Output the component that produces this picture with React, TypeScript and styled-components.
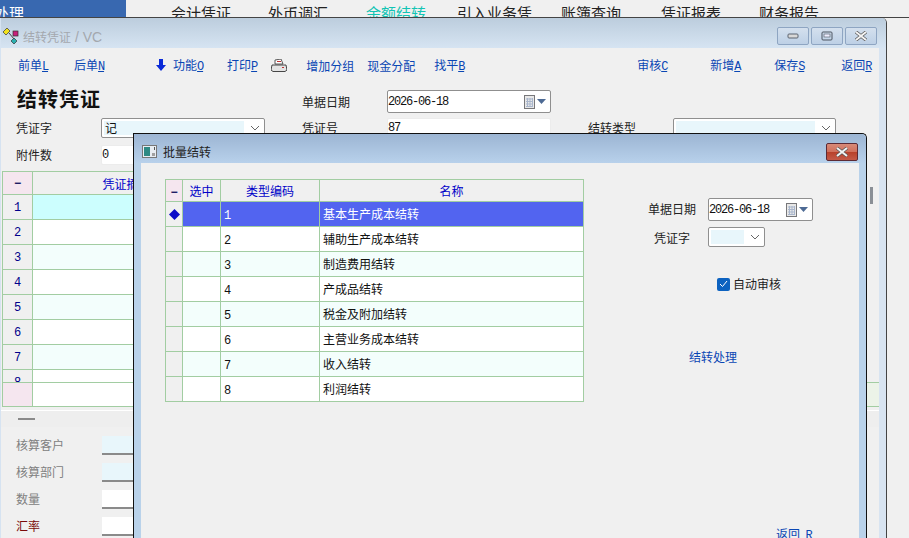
import React from "react";
import styled, { createGlobalStyle } from "styled-components";

const CJK = `"Noto Sans CJK SC", "Liberation Sans", sans-serif`;
const LINK = "#0a46b4";
const GRID_LINE = "#a2cda2";

const menuItems = [
  { text: "会计凭证", gap: 45, color: "#222" },
  { text: "外币调汇", gap: 37, color: "#222" },
  { text: "余额结转", gap: 38, color: "#12c4b4" },
  { text: "引入业务凭", gap: 31, color: "#222" },
  { text: "账簿查询", gap: 29, color: "#222" },
  { text: "凭证报表", gap: 40, color: "#222" },
  { text: "财务报告", gap: 38, color: "#222" },
];

const batchRows = [
  "基本生产成本结转",
  "辅助生产成本结转",
  "制造费用结转",
  "产成品结转",
  "税金及附加结转",
  "主营业务成本结转",
  "收入结转",
  "利润结转",
];

const GlobalStyle = createGlobalStyle`
  html, body {
    margin: 0;
    padding: 0;
    width: 909px;
    height: 538px;
    overflow: hidden;
    background: #f0f0f0;
    font-family: ${CJK};
    font-size: 12px;
    color: #111;
  }
`;

const Page = styled.div`
  width: 909px;
  height: 538px;
  overflow: hidden;
`;

const MenuBar = styled.div`
  display: flex;
  height: 17px;
  border-bottom: 1px solid #444;
  overflow: hidden;
  font-size: 15px;
  line-height: 25px;
`;

const MenuHome = styled.div`
  width: 126px;
  height: 17px;
  background: #3868b0;
  color: #fff;
  text-indent: -6px;
  white-space: nowrap;
  overflow: hidden;
`;

const MenuItem = styled.div<{ $gap: number; $color: string }>`
  margin-left: ${(p) => p.$gap}px;
  color: ${(p) => p.$color};
  white-space: nowrap;
`;

const MainWindow = styled.div`
  position: relative;
  width: 887px;
  height: 520px;
  box-sizing: border-box;
  border-right: 1px solid #444;
  border-left: 1px solid #d6e3f1;
  border-top-right-radius: 5px;
  background: #d8e4f1;
`;

const TitleBar = styled.div`
  display: flex;
  align-items: center;
  height: 30px;
  box-sizing: border-box;
  padding: 6px 2px 0 2px;
  border-top-right-radius: 5px;
  background: linear-gradient(#bccddd, #d6e4f2);
`;

const TitleText = styled.span`
  margin-left: 3px;
  font-size: 12px;
  color: #a4a8ae;
`;

const TitleLatin = styled.span`
  font-family: "Liberation Sans", sans-serif;
  font-size: 14px;
`;

const WinButtons = styled.div`
  display: flex;
  gap: 2px;
  margin-left: auto;
  margin-right: 7px;
`;

const WinButton = styled.div`
  display: flex;
  align-items: center;
  justify-content: center;
  width: 32px;
  height: 18px;
  box-sizing: border-box;
  border: 1px solid #8ea5c2;
  border-radius: 2px;
  background: linear-gradient(#d4e0ee, #bdd0e6);
`;

const Client = styled.div`
  width: 878px;
  height: 490px;
  background: #f0f0f0;
`;

const Toolbar = styled.div`
  display: flex;
  align-items: center;
  height: 36px;
  color: ${LINK};
  white-space: nowrap;
`;

const ToolItem = styled.span<{ $left: number }>`
  display: inline-block;
  margin-left: ${(p) => p.$left}px;
  line-height: 14px;
`;

const Hot = styled.span`
  font-family: "Liberation Mono", monospace;
  font-size: 12px;
  letter-spacing: -1.2px;
  text-decoration: underline;
`;

const FormGrid = styled.div`
  display: grid;
  grid-template-columns: 85px 164px 37px 85px 164px 37px 85px 163px;
  grid-template-rows: 28px 27px 20px;
  padding: 6px 0 0 15px;
  align-items: start;
`;

const BigTitle = styled.div`
  grid-column: 1 / span 2;
  margin: -3px 0 0 1px;
  font-size: 20px;
  font-weight: 700;
  line-height: 23px;
  letter-spacing: 1px;
  color: #111;
`;

const Label = styled.div<{ $col: number; $h?: number }>`
  grid-column: ${(p) => p.$col};
  line-height: ${(p) => p.$h ?? 20}px;
  color: #222;
`;

const FieldBox = styled.div<{ $col?: number; $width?: number; $h?: number; $flat?: boolean }>`
  ${(p) => (p.$col ? `grid-column: ${p.$col};` : "")}
  display: flex;
  align-items: center;
  box-sizing: border-box;
  width: ${(p) => (p.$width ? `${p.$width}px` : "auto")};
  height: ${(p) => p.$h ?? 20}px;
  background: #fff;
  border: 1px solid ${(p) => (p.$flat ? "#ececec" : "#8f8f8f")};
  border-radius: 2px;
  padding: 0 0 0 2px;
`;

const Mono = styled.span`
  margin-left: -2px;
  font-family: "Liberation Mono", monospace;
  font-size: 12px;
  letter-spacing: -1.2px;
  color: #111;
`;

const SelectFill = styled.div`
  flex: 1;
  height: calc(100% - 4px);
  margin-right: 6px;
  padding-left: 1px;
  background: #e8f6fb;
  line-height: 14px;
`;

const ChevronSlot = styled.div`
  display: flex;
  margin-right: 4px;
`;

const DateIcons = styled.div`
  display: flex;
  align-items: center;
  margin-left: auto;
  margin-right: 4px;
  gap: 2px;
`;

const VoucherGrid = styled.div`
  position: relative;
  margin: 6px 0 0 1px;
  width: 877px;
`;

const GridBody = styled.div`
  height: 188px;
  overflow: hidden;
`;

const VoucherRow = styled.div<{ $h: number }>`
  display: grid;
  grid-template-columns: 31px 188px;
  height: ${(p) => p.$h}px;
  box-sizing: border-box;
`;

const IndexCell = styled.div<{ $pink?: boolean }>`
  display: flex;
  align-items: center;
  justify-content: center;
  box-sizing: border-box;
  padding-top: 1px;
  border: 1px solid ${GRID_LINE};
  border-width: 1px 1px 0 1px;
  background: ${(p) => (p.$pink ? "#f5e6ef" : "#f0f0f0")};
  color: #00008b;
  font-family: "Liberation Mono", monospace;
`;

const MinusMark = styled.span`
  font-family: "Liberation Mono", monospace;
  font-weight: 700;
  color: #101060;
`;

const BodyCell = styled.div<{ $fill?: string }>`
  display: flex;
  align-items: center;
  justify-content: center;
  box-sizing: border-box;
  border-top: 1px solid ${GRID_LINE};
  border-right: 1px solid ${GRID_LINE};
  background: ${(p) => p.$fill ?? "#fff"};
  color: #0000c8;
`;

const SummaryRow = styled.div`
  display: grid;
  grid-template-columns: 31px 1fr;
  height: 25px;
  box-sizing: border-box;
  border-top: 1px solid ${GRID_LINE};
  border-bottom: 1px solid ${GRID_LINE};
`;

const SummaryIndex = styled.div`
  background: #f5e6ef;
  border-left: 1px solid ${GRID_LINE};
  border-right: 1px solid ${GRID_LINE};
`;

const SummaryFill = styled.div`
  background: linear-gradient(to right, #fff 220px, #ecf3e8 220px);
`;

const Thumb = styled.div`
  position: absolute;
  left: 868px;
  top: 16px;
  width: 3px;
  height: 17px;
  background: #8a8f96;
`;

const Divider = styled.div`
  display: flex;
  align-items: center;
  height: 16px;
  margin-top: 3px;
  border-top: 1px solid #fff;
  background: #eeeeee;
  padding-left: 17px;
`;

const Dash = styled.div`
  width: 17px;
  height: 2px;
  background: #8a8a8a;
`;

const ExtraForm = styled.div`
  display: grid;
  grid-template-columns: 85px 164px;
  grid-auto-rows: 19px;
  row-gap: 8px;
  padding: 9px 0 0 15px;
  align-items: center;
`;

const ExtraLabel = styled.div<{ $red?: boolean }>`
  padding-bottom: 2px;
  color: ${(p) => (p.$red ? "#7a0a0a" : "#808080")};
`;

const ExtraInput = styled.div<{ $tint?: boolean }>`
  height: 19px;
  margin-left: 1px;
  box-sizing: border-box;
  background: ${(p) => (p.$tint ? "#e8f6fb" : "#fff")};
  border-bottom: 2px solid #8a8a8a;
`;

const Dialog = styled.div`
  position: absolute;
  left: 132px;
  top: 115px;
  width: 734px;
  height: 420px;
  box-sizing: border-box;
  border: 1px solid #111;
  border-bottom: none;
  border-top-right-radius: 5px;
  background: #b9d2ea;
`;

const DialogTitle = styled.div`
  display: flex;
  align-items: center;
  height: 29px;
  box-sizing: border-box;
  padding: 6px 8px 0 8px;
  border-top-right-radius: 5px;
  background: linear-gradient(#9cb5d3, #b8d1eb);
  font-size: 12px;
  color: #222;
`;

const DialogName = styled.span`
  margin-left: 6px;
`;

const CloseButton = styled.div`
  display: flex;
  align-items: center;
  justify-content: center;
  margin-left: auto;
  width: 32px;
  height: 18px;
  box-sizing: border-box;
  border: 1px solid #5c2a34;
  border-radius: 2px;
  background: linear-gradient(#d88a78 0%, #d0705c 48%, #b8402a 50%, #c45a48 100%);
`;

const DialogClient = styled.div`
  display: flex;
  align-items: flex-start;
  width: 718px;
  height: 390px;
  margin-left: 7px;
  padding: 16px 0 0 24px;
  box-sizing: border-box;
  background: #f0f0f0;
`;

const BatchTable = styled.table`
  flex: none;
  width: 419px;
  table-layout: fixed;
  border-collapse: collapse;
  font-size: 12px;
  border: 1px solid ${GRID_LINE};
`;

const HeadCell = styled.th<{ $w: number; $pink?: boolean }>`
  width: ${(p) => p.$w}px;
  height: 21px;
  padding: 0;
  font-weight: 400;
  color: #0000c8;
  background: ${(p) => (p.$pink ? "#f5e6ef" : "#f0f0f0")};
  border: 1px solid ${GRID_LINE};
`;

const Row = styled.tr<{ $tint: boolean; $selected: boolean }>`
  height: 25px;
  background: ${(p) => (p.$selected ? "#5264f0" : p.$tint ? "#f3fefc" : "#fff")};
  color: ${(p) => (p.$selected ? "#fff" : "#111")};
`;

const Cell = styled.td`
  padding: 0 0 1px 3px;
  border: 1px solid ${GRID_LINE};
  white-space: nowrap;
`;

const MarkCell = styled.td`
  padding: 0;
  background: #f0f0f0;
  border: 1px solid ${GRID_LINE};
  text-align: center;
  line-height: 0;
`;

const CodeText = styled.span<{ $light: boolean }>`
  font-family: "Liberation Mono", monospace;
  letter-spacing: -1.2px;
  color: ${(p) => (p.$light ? "#fff" : "#111")};
`;

const SidePanel = styled.div`
  flex: 1;
  display: flex;
  flex-direction: column;
  align-items: flex-start;
  padding: 19px 0 0 64px;
`;

const SideFields = styled.div`
  display: grid;
  grid-template-columns: 48px 105px;
  grid-template-rows: 23px 20px;
  column-gap: 12px;
  row-gap: 6px;
  align-items: center;
  justify-items: center;
  color: #222;
`;

const SideLabel = styled.span<{ $lift?: number }>`
  padding-bottom: ${(p) => p.$lift ?? 0}px;
`;

const SideField = styled(FieldBox)`
  justify-self: start;
`;

const AutoCheck = styled.label`
  display: flex;
  align-items: center;
  gap: 3px;
  margin: 30px 0 0 69px;
  height: 14px;
  line-height: 12px;
  color: #222;
`;

const CheckBox = styled.div`
  display: flex;
  align-items: center;
  justify-content: center;
  width: 13px;
  height: 13px;
  border-radius: 2px;
  background: #0c62c0;
`;

const SideLink = styled.div<{ $left: number; $top: number }>`
  margin: ${(p) => p.$top}px 0 0 ${(p) => p.$left}px;
  color: ${LINK};
  line-height: 16px;
  white-space: nowrap;
`;

const Chevron = () => (
  <ChevronSlot>
    <svg width="10" height="6" viewBox="0 0 10 6">
      <path d="M1 1l4 4 4-4" fill="none" stroke="#666" strokeWidth="1" />
    </svg>
  </ChevronSlot>
);

const CalendarIcons = () => (
  <DateIcons>
    <svg width="12" height="14" viewBox="0 0 12 14">
      <rect x="1.5" y="0.5" width="10" height="13" fill="#e8e8e8" stroke="#77777a" />
      <path d="M3 4h7M3 6.5h7M3 9h7M3 11.5h7M4.5 3v9M7 3v9M9.5 3v9" stroke="#a9b6cc" strokeWidth="1" />
    </svg>
    <svg width="9" height="5" viewBox="0 0 9 5">
      <path d="M0 0h9L4.5 5z" fill="#4d6a94" />
    </svg>
  </DateIcons>
);

const CloseGlyph = () => (
  <svg width="14" height="10" viewBox="0 0 14 10">
    <path d="M2 1l10 8M12 1L2 9" stroke="#555" strokeWidth="3.4" />
    <path d="M2 1l10 8M12 1L2 9" stroke="#f4f4f4" strokeWidth="2" />
  </svg>
);

const AppIcon = () => (
  <svg width="17" height="17" viewBox="0 0 17 17">
    <path d="M4 0l3 3-4 4-3-3z" fill="#f2e21c" stroke="#333" strokeWidth="0.7" />
    <rect x="10" y="3" width="5" height="5" fill="#c8207a" stroke="#333" strokeWidth="0.7" />
    <path d="M11 10l3 3-3 3-3-3z" fill="#2ab0b0" stroke="#333" strokeWidth="0.7" />
    <path d="M6 5l5 6" stroke="#444" strokeWidth="1" />
  </svg>
);

const DialogIcon = () => (
  <svg width="15" height="13" viewBox="0 0 15 13">
    <rect x="0.5" y="0.5" width="14" height="12" fill="#e8edf2" stroke="#777" />
    <rect x="2" y="2" width="6" height="9" fill="#2e8a84" />
    <rect x="10" y="8" width="3" height="3" fill="#a0a0a0" />
    <rect x="12" y="2" width="1" height="3" fill="#555" />
  </svg>
);

const PrinterIcon = () => (
  <svg width="16" height="13" viewBox="0 0 16 13">
    <path d="M4 1l6-1 2 5H4z" fill="#fff" stroke="#333" strokeWidth="0.8" />
    <path d="M6 2.5h4" stroke="#c03030" strokeWidth="1" />
    <path d="M1 6h14l1 5-2 1.5H2L0 11z" fill="#e4e4e4" stroke="#333" strokeWidth="0.9" />
    <path d="M11 8.5h2" stroke="#c03030" strokeWidth="1" />
  </svg>
);

const voucherFill = (i: number) => (i === 0 ? "#ccfefe" : i % 2 === 0 ? "#f3fefc" : "#fff");

export default function App() {
  return (
    <Page>
      <GlobalStyle />
      <MenuBar>
        <MenuHome>处理</MenuHome>
        {menuItems.map((m) => (
          <MenuItem key={m.text} $gap={m.gap} $color={m.color}>
            {m.text}
          </MenuItem>
        ))}
      </MenuBar>

      <MainWindow>
        <TitleBar>
          <AppIcon />
          <TitleText>
            结转凭证<TitleLatin> / VC</TitleLatin>
          </TitleText>
          <WinButtons>
            <WinButton>
              <svg width="12" height="6" viewBox="0 0 12 6">
                <rect x="1" y="1" width="10" height="4" rx="1" fill="#d8d8d8" stroke="#5c6470" />
              </svg>
            </WinButton>
            <WinButton>
              <svg width="12" height="10" viewBox="0 0 12 10">
                <rect x="1" y="1" width="10" height="8" rx="1" fill="none" stroke="#4c5460" />
                <rect x="3" y="3" width="6" height="3" fill="#eef" stroke="#4c5460" strokeWidth="0.6" />
              </svg>
            </WinButton>
            <WinButton>
              <CloseGlyph />
            </WinButton>
          </WinButtons>
        </TitleBar>

        <Client>
          <Toolbar>
            <ToolItem $left={17}>前单<Hot>L</Hot></ToolItem>
            <ToolItem $left={26}>后单<Hot>N</Hot></ToolItem>
            <ToolItem $left={52}>
              <svg width="10" height="12" viewBox="0 0 10 12">
                <path d="M3 0h4v6h3l-5 6-5-6h3z" fill="#0a2ad8" />
              </svg>
            </ToolItem>
            <ToolItem $left={7}>功能<Hot>O</Hot></ToolItem>
            <ToolItem $left={24}>打印<Hot>P</Hot></ToolItem>
            <ToolItem $left={14}><PrinterIcon /></ToolItem>
            <ToolItem $left={19}>增加分组</ToolItem>
            <ToolItem $left={13}>现金分配</ToolItem>
            <ToolItem $left={19}>找平<Hot>B</Hot></ToolItem>
            <ToolItem $left={173}>审核<Hot>C</Hot></ToolItem>
            <ToolItem $left={43}>新增<Hot>A</Hot></ToolItem>
            <ToolItem $left={34}>保存<Hot>S</Hot></ToolItem>
            <ToolItem $left={37}>返回<Hot>R</Hot></ToolItem>
          </Toolbar>

          <FormGrid>
            <BigTitle>结转凭证</BigTitle>
            <Label $col={4} $h={23}>单据日期</Label>
            <FieldBox $col={5} $h={23}>
              <Mono>2026-06-18</Mono>
              <CalendarIcons />
            </FieldBox>

            <Label $col={1}>凭证字</Label>
            <FieldBox $col={2}>
              <SelectFill>记</SelectFill>
              <Chevron />
            </FieldBox>
            <Label $col={4}>凭证号</Label>
            <FieldBox $col={5} $flat>
              <Mono>87</Mono>
            </FieldBox>
            <Label $col={7}>结转类型</Label>
            <FieldBox $col={8}>
              <SelectFill />
              <Chevron />
            </FieldBox>

            <Label $col={1}>附件数</Label>
            <FieldBox $col={2} $flat>
              <Mono>0</Mono>
            </FieldBox>
          </FormGrid>

          <VoucherGrid>
            <VoucherRow $h={23}>
              <IndexCell $pink><MinusMark>−</MinusMark></IndexCell>
              <BodyCell $fill="#f0f0f0">凭证摘要</BodyCell>
            </VoucherRow>
            <GridBody>
              {[0, 1, 2, 3, 4, 5, 6, 7].map((i) => (
                <VoucherRow key={i} $h={25}>
                  <IndexCell>{i + 1}</IndexCell>
                  <BodyCell $fill={voucherFill(i)} />
                </VoucherRow>
              ))}
            </GridBody>
            <SummaryRow>
              <SummaryIndex />
              <SummaryFill />
            </SummaryRow>
            <Thumb />
          </VoucherGrid>

          <Divider>
            <Dash />
          </Divider>

          <ExtraForm>
            <ExtraLabel>核算客户</ExtraLabel>
            <ExtraInput $tint />
            <ExtraLabel>核算部门</ExtraLabel>
            <ExtraInput $tint />
            <ExtraLabel>数量</ExtraLabel>
            <ExtraInput />
            <ExtraLabel $red>汇率</ExtraLabel>
            <ExtraInput />
          </ExtraForm>
        </Client>

        <Dialog>
          <DialogTitle>
            <DialogIcon />
            <DialogName>批量结转</DialogName>
            <CloseButton>
              <CloseGlyph />
            </CloseButton>
          </DialogTitle>
          <DialogClient>
            <BatchTable>
              <colgroup>
                <col width={17} />
                <col width={38} />
                <col width={99} />
                <col width={264} />
              </colgroup>
              <thead>
                <tr>
                  <HeadCell $w={17} $pink><MinusMark>−</MinusMark></HeadCell>
                  <HeadCell $w={38}>选中</HeadCell>
                  <HeadCell $w={99}>类型编码</HeadCell>
                  <HeadCell $w={264}>名称</HeadCell>
                </tr>
              </thead>
              <tbody>
                {batchRows.map((name, i) => (
                  <Row key={name} $tint={i % 2 === 0} $selected={i === 0}>
                    <MarkCell>
                      {i === 0 && (
                        <svg width="11" height="11" viewBox="0 0 11 11">
                          <path d="M5.5 0L11 5.5 5.5 11 0 5.5z" fill="#0a0ac8" />
                        </svg>
                      )}
                    </MarkCell>
                    <Cell />
                    <Cell>
                      <CodeText $light={i === 0}>{i + 1}</CodeText>
                    </Cell>
                    <Cell>{name}</Cell>
                  </Row>
                ))}
              </tbody>
            </BatchTable>

            <SidePanel>
              <SideFields>
                <SideLabel $lift={3}>单据日期</SideLabel>
                <SideField $width={105} $h={23}>
                  <Mono>2026-06-18</Mono>
                  <CalendarIcons />
                </SideField>
                <SideLabel>凭证字</SideLabel>
                <SideField $width={57}>
                  <SelectFill />
                  <Chevron />
                </SideField>
              </SideFields>
              <AutoCheck>
                <CheckBox>
                  <svg width="9" height="8" viewBox="0 0 9 8">
                    <path d="M1 4l2.5 2.5L8 1" fill="none" stroke="#fff" strokeWidth="1" />
                  </svg>
                </CheckBox>
                自动审核
              </AutoCheck>
              <SideLink $left={41} $top={58}>结转处理</SideLink>
              <SideLink $left={128} $top={161}>返回&nbsp;&nbsp;<Hot>R</Hot></SideLink>
            </SidePanel>
          </DialogClient>
        </Dialog>
      </MainWindow>
    </Page>
  );
}
